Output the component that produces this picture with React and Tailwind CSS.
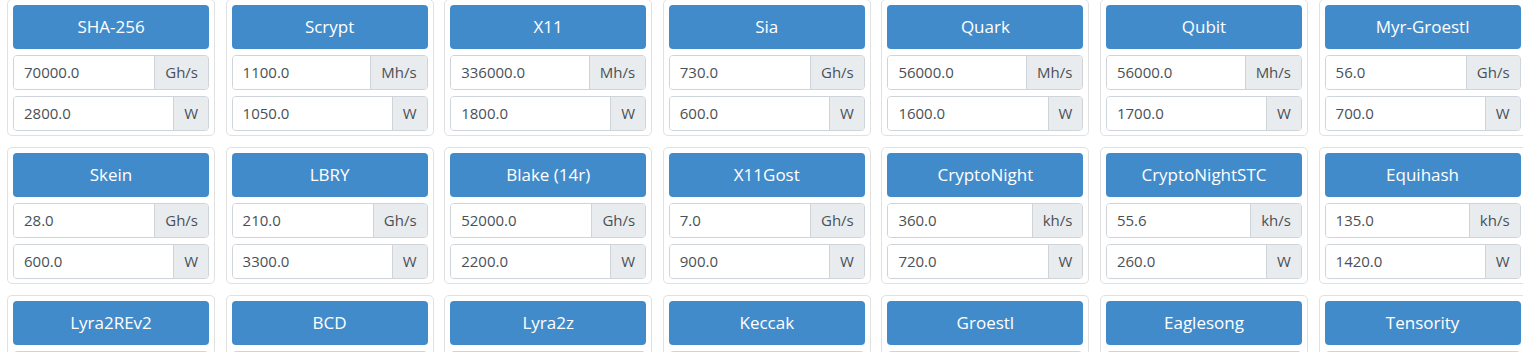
import React from 'react';

const rows = [
  [
    ['SHA-256', '70000.0', 'Gh/s', '2800.0'],
    ['Scrypt', '1100.0', 'Mh/s', '1050.0'],
    ['X11', '336000.0', 'Mh/s', '1800.0'],
    ['Sia', '730.0', 'Gh/s', '600.0'],
    ['Quark', '56000.0', 'Mh/s', '1600.0'],
    ['Qubit', '56000.0', 'Mh/s', '1700.0'],
    ['Myr-Groestl', '56.0', 'Gh/s', '700.0'],
  ],
  [
    ['Skein', '28.0', 'Gh/s', '600.0'],
    ['LBRY', '210.0', 'Gh/s', '3300.0'],
    ['Blake (14r)', '52000.0', 'Gh/s', '2200.0'],
    ['X11Gost', '7.0', 'Gh/s', '900.0'],
    ['CryptoNight', '360.0', 'kh/s', '720.0'],
    ['CryptoNightSTC', '55.6', 'kh/s', '260.0'],
    ['Equihash', '135.0', 'kh/s', '1420.0'],
  ],
  [
    ['Lyra2REv2'],
    ['BCD'],
    ['Lyra2z'],
    ['Keccak'],
    ['Groestl'],
    ['Eaglesong'],
    ['Tensority'],
  ],
];

const InputRow = ({ value, unit }) => (
  <div className="flex h-[35px] rounded-[4px] border border-[#ced4da] overflow-hidden">
    <div className="flex-1 min-w-0 flex items-center pl-[10px] text-[15px] text-[#495057] bg-white">
      {value}
    </div>
    {unit && (
      <div className="flex items-center px-[10px] border-l border-[#ced4da] bg-[#e9ecef] text-[15px] text-[#495057]">
        {unit}
      </div>
    )}
  </div>
);

const AlgoCard = ({ name, rate, unit, power }) => (
  <div className="w-[208px] shrink-0 border border-[#e1e1e1] rounded-[5px] pt-[5px] px-[5px] pb-[4px] flex flex-col gap-[6px]">
    <div className="h-[44px] rounded-[4px] bg-[#428bca] text-white text-[17px] flex items-center justify-center">
      {name}
    </div>
    <InputRow value={rate} unit={unit} />
    <InputRow value={power} unit={unit ? 'W' : ''} />
  </div>
);

export default function App() {
  return (
    <div
      className="w-[1523px] h-[352px] overflow-hidden bg-white"
      style={{ fontFamily: '"Open Sans", "Noto Sans", sans-serif' }}
    >
      <div className="-mt-[1px] flex flex-col gap-[11px]">
        {rows.map((row, i) => (
          <div key={i} className="flex gap-[10.6px] pl-[7px]">
            {row.map((c) => (
              <AlgoCard key={c[0]} name={c[0]} rate={c[1]} unit={c[2]} power={c[3]} />
            ))}
          </div>
        ))}
      </div>
    </div>
  );
}
